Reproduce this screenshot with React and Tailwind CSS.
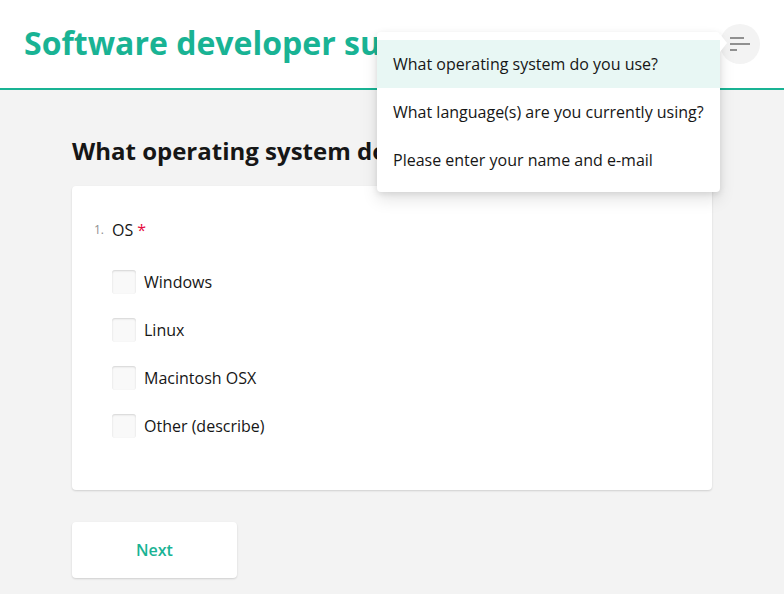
const options = ["Windows", "Linux", "Macintosh OSX", "Other (describe)"]

const toc = [
  "What operating system do you use?",
  "What language(s) are you currently using?",
  "Please enter your name and e-mail",
]

function Checkbox({ label }) {
  return (
    <div className="h-12 flex items-center">
      <span className="w-6 h-6 rounded-[3px] bg-[#f9f9f9] shadow-[inset_0_1px_2px_rgba(0,0,0,0.15)] mr-2" />
      <span className="text-base leading-6 text-[#161616]">{label}</span>
    </div>
  )
}

export default function App() {
  return (
    <div className="relative min-h-[594px] bg-[#f3f3f3] overflow-hidden font-['Open_Sans',sans-serif]">
      <header className="h-[90px] bg-white border-b-2 border-[#19b394] flex items-center pl-6 pb-[2px]">
        <h1 className="text-[32px] leading-10 font-bold text-[#19b394] whitespace-nowrap">Software developer survey</h1>
      </header>

      <main className="px-[72px] pt-[45px]">
        <h2 className="text-2xl leading-8 font-bold text-[#161616]">What operating system do you use?</h2>

        <div className="mt-[19px] bg-white rounded shadow-[0_1px_2px_rgba(0,0,0,0.15)] pt-8 pb-10 pl-[22px]">
          <div className="flex items-center h-6">
            <span className="w-[18px] text-xs text-[#909090]">1.</span>
            <span className="text-base text-[#161616]">OS</span>
            <span className="ml-1 text-base text-[#e60a3e]">*</span>
          </div>
          <div className="mt-4 pl-[18px]">
            {options.map((o) => (
              <Checkbox key={o} label={o} />
            ))}
          </div>
        </div>

        <button className="mt-8 w-[165px] h-14 bg-white rounded shadow-[0_1px_2px_rgba(0,0,0,0.15)] text-base font-semibold text-[#19b394]">
          Next
        </button>
      </main>

      {/* toc menu button */}
      <div className="absolute left-[720px] top-6 w-10 h-10 rounded-full bg-[#f3f3f3] flex flex-col justify-center items-start pl-[10px] gap-1">
        <span className="w-[14px] h-[2px] bg-[#909090]" />
        <span className="w-5 h-[2px] bg-[#909090]" />
        <span className="w-[7px] h-[2px] bg-[#909090]" />
      </div>

      {/* popup */}
      <div className="absolute left-[377px] top-8 w-[343px] py-2 bg-white rounded shadow-[0_2px_6px_rgba(0,0,0,0.1),0_8px_16px_rgba(0,0,0,0.1)]">
        {toc.map((t, i) => (
          <div key={t} className={`h-12 flex items-center pl-4 text-base text-[#161616] ${i === 0 ? "bg-[#e8f7f4]" : ""}`}>
            {t}
          </div>
        ))}
        <svg className="absolute left-full top-[2px]" width="8" height="18" viewBox="0 0 8 18">
          <path d="M0 0 L7 9 L0 18 Z" fill="#fff" />
        </svg>
      </div>
    </div>
  )
}
